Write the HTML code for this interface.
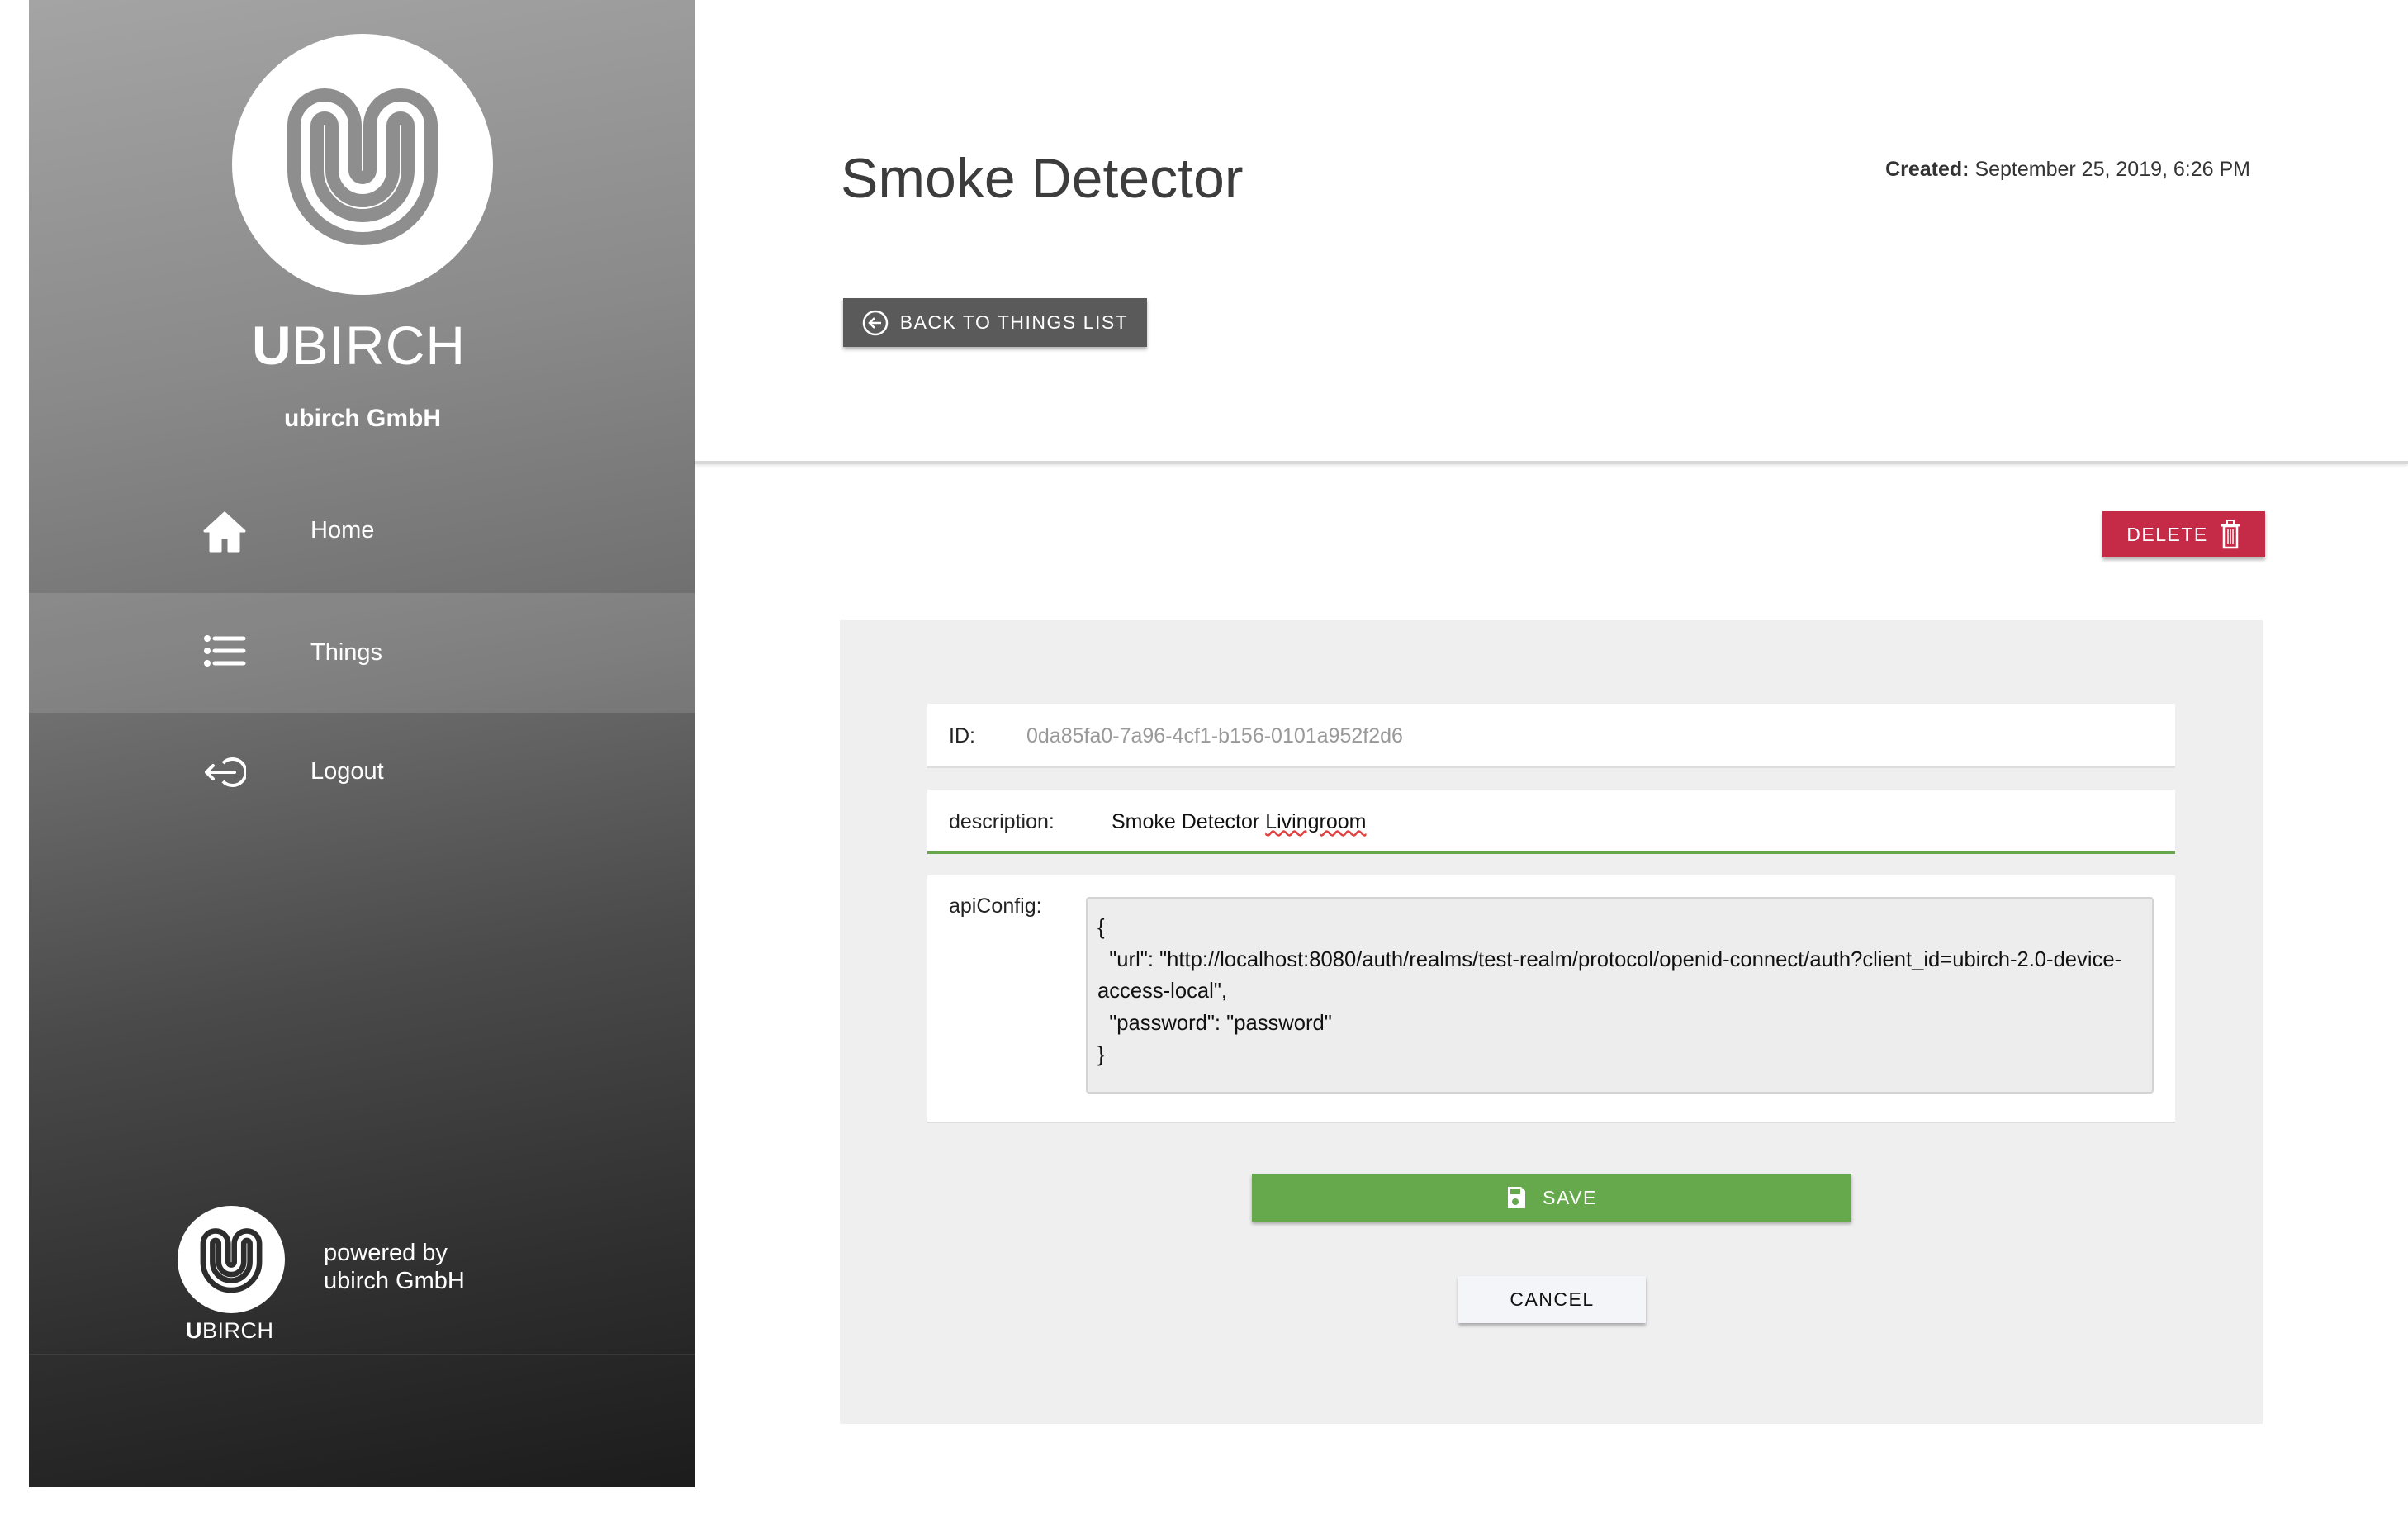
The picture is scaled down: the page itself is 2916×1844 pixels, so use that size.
<!DOCTYPE html>
<html><head><meta charset="utf-8">
<style>
*{margin:0;padding:0;box-sizing:border-box}
body{width:2916px;height:1844px;background:#fff;position:relative;overflow:hidden;font-family:"Liberation Sans",sans-serif}
.abs{position:absolute}
#side{left:35px;top:0;width:807px;height:1801px;background:linear-gradient(170deg,#a4a4a4 0%,#8a8a8a 25%,#6f6f6f 45%,#4a4a4a 65%,#2e2e2e 85%,#1c1c1c 100%);overflow:hidden}
.nav{color:#fff;font-size:29px}
.btn{text-transform:uppercase;letter-spacing:1.5px;font-size:23px;display:flex;align-items:center;justify-content:center;box-shadow:0 3px 4px rgba(0,0,0,.3)}
.lbl{font-size:25px;color:#222}
</style></head><body>
<div id="side" class="abs">
  <div class="abs" style="left:0;top:718px;width:807px;height:145px;background:rgba(255,255,255,.13)"></div>
  <div class="abs" style="left:0;top:1639px;width:807px;height:1px;background:rgba(255,255,255,.08)"></div>
</div>
<svg class="abs" style="left:0;top:0" width="860" height="370">
  <circle cx="439" cy="199" r="158" fill="#fff"/>
  <path d="M416 206 L416 152 A23 23 0 0 0 370 152 L370 206 A69 69 0 0 0 508 206 L508 152 A23 23 0 0 0 462 152 L462 206 A23 23 0 0 1 416 206" fill="none" stroke="#8e8e8e" stroke-width="44" stroke-linecap="round"/>
  <path d="M416 206 L416 152 A23 23 0 0 0 370 152 L370 206 A69 69 0 0 0 508 206 L508 152 A23 23 0 0 0 462 152 L462 206 A23 23 0 0 1 416 206" fill="none" stroke="#fff" stroke-width="12" stroke-linecap="round"/>
</svg>
<div class="abs" style="left:305px;top:380px;color:#fff;font-size:66px;letter-spacing:1px;line-height:76px;white-space:nowrap"><b style="font-weight:900">U</b><span style="font-weight:300">BIRCH</span></div>
<div class="abs" style="left:300px;top:490px;width:278px;text-align:center;color:#fff;font-size:30px;font-weight:bold">ubirch GmbH</div>
<svg class="abs" style="left:246px;top:619px" width="52" height="50" viewBox="0 0 52 50"><path d="M26 2 L2 24 H9 V48 H21 V32 H31 V48 H43 V24 H50 Z" fill="#fff" stroke="#fff" stroke-width="3" stroke-linejoin="round"/></svg>
<div class="abs nav" style="left:376px;top:626px">Home</div>
<svg class="abs" style="left:246px;top:768px" width="52" height="42"><g fill="#fff"><circle cx="5" cy="5" r="4"/><circle cx="5" cy="20" r="4"/><circle cx="5" cy="35" r="4"/></g><g stroke="#fff" stroke-width="5" stroke-linecap="round"><line x1="14" y1="5" x2="49" y2="5"/><line x1="14" y1="20" x2="49" y2="20"/><line x1="14" y1="35" x2="49" y2="35"/></g></svg>
<div class="abs nav" style="left:376px;top:774px">Things</div>
<svg class="abs" style="left:246px;top:914px" width="52" height="42" viewBox="0 0 52 42"><path d="M24 10 A16 16 0 1 1 24 32" fill="none" stroke="#fff" stroke-width="4"/><path d="M4 21 H38 M12 13 L4 21 L12 29" fill="none" stroke="#fff" stroke-width="4" stroke-linecap="round" stroke-linejoin="round"/></svg>
<div class="abs nav" style="left:376px;top:918px">Logout</div>
<svg class="abs" style="left:215px;top:1460px" width="130" height="130" viewBox="281 41 316 316">
  <circle cx="439" cy="199" r="158" fill="#fff"/>
  <path d="M416 206 L416 152 A23 23 0 0 0 370 152 L370 206 A69 69 0 0 0 508 206 L508 152 A23 23 0 0 0 462 152 L462 206 A23 23 0 0 1 416 206" fill="none" stroke="#2d2d2d" stroke-width="44" stroke-linecap="round"/>
  <path d="M416 206 L416 152 A23 23 0 0 0 370 152 L370 206 A69 69 0 0 0 508 206 L508 152 A23 23 0 0 0 462 152 L462 206 A23 23 0 0 1 416 206" fill="none" stroke="#fff" stroke-width="12" stroke-linecap="round"/>
</svg>
<div class="abs" style="left:225px;top:1596px;color:#fff;font-size:27px;letter-spacing:0.5px;white-space:nowrap"><b style="font-weight:900">U</b>BIRCH</div>
<div class="abs" style="left:392px;top:1500px;color:#fff;font-size:29px;line-height:34px">powered by<br>ubirch GmbH</div>

<div class="abs" style="left:1018px;top:177px;font-size:68px;color:#3c3c3c">Smoke Detector</div>
<div class="abs" style="right:191px;top:191px;font-size:25px;color:#333;white-space:nowrap"><b>Created:</b> September 25, 2019, 6:26 PM</div>
<div class="abs btn" style="left:1021px;top:361px;width:368px;height:59px;background:#5a5a5a;color:#fff">
  <svg width="32" height="32" style="margin-right:14px"><circle cx="16" cy="16" r="14" fill="none" stroke="#fff" stroke-width="2.5"/><path d="M23 16 H9 M15 10 L9 16 L15 22" fill="none" stroke="#fff" stroke-width="2.5"/></svg>Back to things list</div>
<div class="abs" style="left:842px;top:558px;width:2074px;height:4px;background:#d8d8d8;box-shadow:0 2px 3px rgba(0,0,0,.1)"></div>
<div class="abs btn" style="left:2546px;top:619px;width:197px;height:56px;background:#c52a47;color:#fff">Delete
  <svg width="26" height="36" style="margin-left:14px"><rect x="5" y="8" width="16" height="26" fill="none" stroke="#fff" stroke-width="2.5"/><line x1="2" y1="7" x2="24" y2="7" stroke="#fff" stroke-width="3"/><rect x="9" y="1" width="8" height="6" fill="none" stroke="#fff" stroke-width="2"/><g stroke="#fff" stroke-width="1.5"><line x1="10" y1="12" x2="10" y2="30"/><line x1="13" y1="12" x2="13" y2="30"/><line x1="16" y1="12" x2="16" y2="30"/></g></svg></div>

<div class="abs" style="left:1017px;top:751px;width:1723px;height:973px;background:#efefef"></div>
<div class="abs" style="left:1123px;top:852px;width:1511px;height:78px;background:#fff;border-bottom:2px solid #ddd"></div>
<div class="abs lbl" style="left:1149px;top:877px">ID:</div>
<div class="abs" style="left:1243px;top:877px;font-size:25px;color:#999">0da85fa0-7a96-4cf1-b156-0101a952f2d6</div>
<div class="abs" style="left:1123px;top:956px;width:1511px;height:78px;background:#fff;border-bottom:4px solid #66a84b"></div>
<div class="abs lbl" style="left:1149px;top:981px">description:</div>
<div class="abs lbl" style="left:1346px;top:981px;color:#111">Smoke Detector <span style="text-decoration:underline wavy #e04040">Livingroom</span></div>
<div class="abs" style="left:1123px;top:1060px;width:1511px;height:300px;background:#fff;border-bottom:2px solid #ddd"></div>
<div class="abs lbl" style="left:1149px;top:1083px">apiConfig:</div>
<div class="abs" style="left:1315px;top:1086px;width:1293px;height:238px;background:#ededed;border:2px solid #d3d3d3;border-radius:4px"></div>
<div class="abs" style="left:1329px;top:1104px;width:1270px;font-size:25.6px;line-height:38.5px;color:#111;white-space:pre">{
  "url": "http://localhost:8080/auth/realms/test-realm/protocol/openid-connect/auth?client_id=ubirch-2.0-device-
access-local",
  "password": "password"
}</div>
<div class="abs btn" style="left:1516px;top:1421px;width:726px;height:58px;background:#66a94c;color:#fff">
  <svg width="24" height="30" style="margin-right:20px"><path d="M2 2 H18 L23 7 V28 H2 Z" fill="#fff"/><rect x="5" y="4" width="12" height="7" fill="#66a94c"/><circle cx="11" cy="20" r="4" fill="#66a94c"/></svg>Save</div>
<div class="abs btn" style="left:1766px;top:1545px;width:227px;height:57px;background:#f4f5f8;color:#111">Cancel</div>
</body></html>
